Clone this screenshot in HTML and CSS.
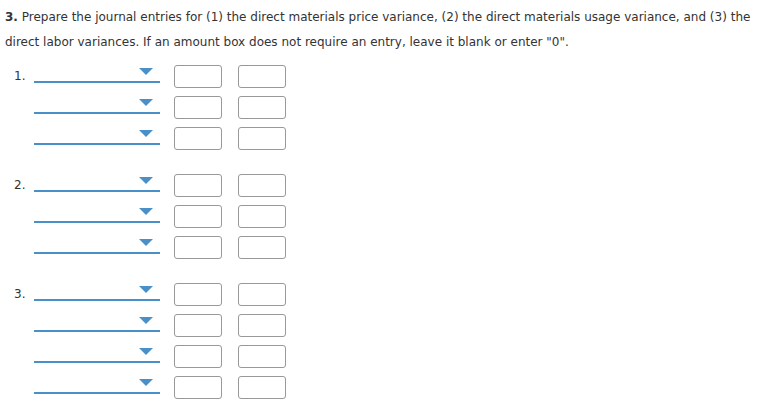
FILE: index.html
```html
<!DOCTYPE html>
<html lang="en">
<head>
    <meta charset="UTF-8">
    <title>Journal Entries</title>
    <link rel="stylesheet" href="styles.css">
</head>
<body>
    <div class="question">
        <p class="prompt"><b>3.</b> Prepare the journal entries for (1) the direct materials price variance, (2) the direct materials usage variance, and (3) the direct labor variances. If an amount box does not require an entry, leave it blank or enter "0".</p>

        <div class="journal">
            <div class="entry">
                <div class="num">1.</div>
                <div class="rows">
                    <div class="row"><div class="account"><span class="arrow"></span></div><div class="amount"></div><div class="amount"></div></div>
                    <div class="row"><div class="account"><span class="arrow"></span></div><div class="amount"></div><div class="amount"></div></div>
                    <div class="row"><div class="account"><span class="arrow"></span></div><div class="amount"></div><div class="amount"></div></div>
                </div>
            </div>

            <div class="entry">
                <div class="num">2.</div>
                <div class="rows">
                    <div class="row"><div class="account"><span class="arrow"></span></div><div class="amount"></div><div class="amount"></div></div>
                    <div class="row"><div class="account"><span class="arrow"></span></div><div class="amount"></div><div class="amount"></div></div>
                    <div class="row"><div class="account"><span class="arrow"></span></div><div class="amount"></div><div class="amount"></div></div>
                </div>
            </div>

            <div class="entry">
                <div class="num">3.</div>
                <div class="rows">
                    <div class="row"><div class="account"><span class="arrow"></span></div><div class="amount"></div><div class="amount"></div></div>
                    <div class="row"><div class="account"><span class="arrow"></span></div><div class="amount"></div><div class="amount"></div></div>
                    <div class="row"><div class="account"><span class="arrow"></span></div><div class="amount"></div><div class="amount"></div></div>
                    <div class="row"><div class="account"><span class="arrow"></span></div><div class="amount"></div><div class="amount"></div></div>
                </div>
            </div>
        </div>
    </div>
</body>
</html>
```

FILE: styles.css
```css
body {
    margin: 0;
    background-color: white;
    color: #333;
    font-family: "DejaVu Sans", Verdana, sans-serif;
}

.question {
    padding: 5px 0 0 5px;
}

.prompt {
    margin: 0;
    font-size: 12px;
    line-height: 25px;
}

.journal {
    margin-top: 10px;
    display: flex;
    flex-direction: column;
    gap: 24px;
}

.entry {
    display: flex;
}

.num {
    width: 20px;
    padding-left: 9px;
    font-size: 12px;
    line-height: 23px;
}

.rows {
    display: flex;
    flex-direction: column;
    gap: 8px;
}

.row {
    display: flex;
    align-items: flex-start;
}

.account {
    width: 119px;
    height: 13px;
    padding: 3px 7px 0 0;
    box-sizing: content-box;
    border-bottom: 2px solid #4a90c8;
    display: flex;
    justify-content: flex-end;
    margin-right: 14px;
}

.account .arrow {
    width: 0;
    height: 0;
    border-left: 7px solid transparent;
    border-right: 7px solid transparent;
    border-top: 7px solid #4a90c8;
}

.amount {
    width: 48px;
    height: 23px;
    box-sizing: border-box;
    border: 1px solid #999;
    border-radius: 3px;
    margin-right: 16px;
}
```
